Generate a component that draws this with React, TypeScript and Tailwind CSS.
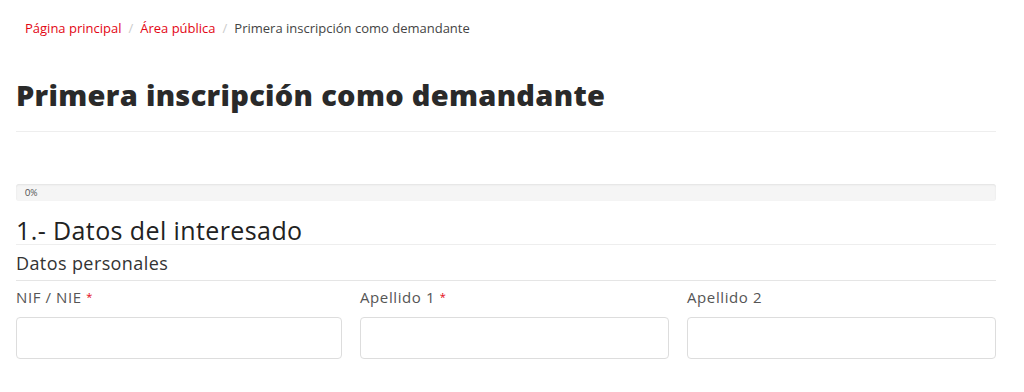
export default function App() {
  return (
    <div className="min-h-[392px] bg-white px-4 font-['Lato','Open_Sans',sans-serif] text-[#333]">
      <nav className="pt-[19px] flex items-center text-[13px] font-['Open_Sans',sans-serif] leading-[18px]">
        <a className="ml-[9px] text-[#e30613]">Página principal</a>
        <span className="mx-[7px] text-[#ccc]">/</span>
        <a className="text-[#e30613]">Área pública</a>
        <span className="mx-[7px] text-[#ccc]">/</span>
        <span className="text-[#444]">Primera inscripción como demandante</span>
      </nav>

      <h1 className="mt-[41px] text-[29px] font-extrabold leading-[34px] tracking-[0.3px] text-[#2a2a2a] font-['Open_Sans',sans-serif]">
        Primera inscripción como demandante
      </h1>
      <div className="mt-[19px] w-[980px] border-t border-[#eeeeee]" />

      <div className="mt-[52px] h-[17px] w-[980px] rounded-[3px] bg-[#f5f5f5] shadow-[inset_0_1px_2px_rgba(0,0,0,0.08)] flex items-center">
        <span className="ml-[9px] text-[9px] text-[#555]">0%</span>
      </div>

      <h2 className="mt-[15px] text-[25px] leading-[28px] font-normal tracking-[0.4px] text-[#222] font-['Open_Sans',sans-serif]">
        1.- Datos del interesado
      </h2>
      <div className="w-[980px] border-t border-[#eeeeee]" />
      <h3 className="mt-[8px] text-[18px] leading-[20px] tracking-[0.4px] text-[#333] font-['Open_Sans',sans-serif]">
        Datos personales
      </h3>
      <div className="mt-[7px] w-[980px] border-t border-[#e5e5e5]" />

      <div className="mt-[7px] flex w-[980px] gap-[18px] font-['Open_Sans',sans-serif]">
        <div className="w-[326px]">
          <label className="block text-[15px] leading-[18px] tracking-[0.6px] text-[#555]">
            NIF / NIE <span className="text-[#e30613] text-[11px] align-top">*</span>
          </label>
          <input className="mt-[11px] h-[42px] w-full rounded-[4px] border border-[#dddddd] bg-white" />
        </div>
        <div className="w-[309px]">
          <label className="block text-[15px] leading-[18px] tracking-[0.6px] text-[#555]">
            Apellido 1 <span className="text-[#e30613] text-[11px] align-top">*</span>
          </label>
          <input className="mt-[11px] h-[42px] w-full rounded-[4px] border border-[#dddddd] bg-white" />
        </div>
        <div className="w-[309px]">
          <label className="block text-[15px] leading-[18px] tracking-[0.6px] text-[#555]">Apellido 2</label>
          <input className="mt-[11px] h-[42px] w-full rounded-[4px] border border-[#dddddd] bg-white" />
        </div>
      </div>
    </div>
  );
}
